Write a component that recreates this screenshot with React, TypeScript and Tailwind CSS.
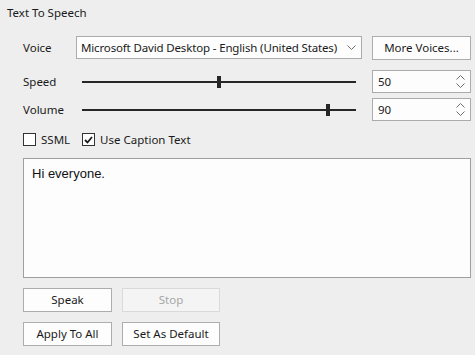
import React from 'react';

function Chevron({ dir = 'down' }: { dir?: 'up' | 'down' }) {
	return (
		<svg width="9" height="5" viewBox="0 0 9 5" className="block">
			{dir === 'down' ? (
				<path d="M0.5 0.5 L4.5 4.5 L8.5 0.5" fill="none" stroke="#6d6d6d" strokeWidth="1" />
			) : (
				<path d="M0.5 4.5 L4.5 0.5 L8.5 4.5" fill="none" stroke="#6d6d6d" strokeWidth="1" />
			)}
		</svg>
	);
}

function Slider({ pos }: { pos: number }) {
	return (
		<div className="relative w-[286px] h-[23px] flex items-center px-[6px]">
			<div className="relative w-full h-[2px] bg-[#262626]">
				<div className="absolute top-[-5px] w-[4px] h-[12px] bg-[#262626]" style={{ left: pos }} />
			</div>
		</div>
	);
}

function Spin({ value }: { value: string }) {
	return (
		<div className="ml-[10px] w-[99px] h-[23px] bg-[#fdfdfd] border border-[#ababab] flex items-center justify-between pl-[5px] pr-[5px]">
			<span>{value}</span>
			<div className="flex flex-col gap-[3px]">
				<Chevron dir="up" />
				<Chevron dir="down" />
			</div>
		</div>
	);
}

function Check({ checked, label }: { checked: boolean; label: string }) {
	return (
		<div className="flex items-center">
			<div className="w-[13px] h-[13px] bg-white border border-[#333333] flex items-center justify-center">
				{checked && (
					<svg width="9" height="8" viewBox="0 0 9 8">
						<path d="M1 4 L3.5 6.5 L8 1" fill="none" stroke="#1a1a1a" strokeWidth="1.8" />
					</svg>
				)}
			</div>
			<span className="ml-[5px]">{label}</span>
		</div>
	);
}

function Btn({ children, w, disabled }: { children: React.ReactNode; w: string; disabled?: boolean }) {
	return (
		<div
			className={
				'h-[24px] flex items-center justify-center border ' +
				w +
				(disabled ? ' bg-[#f4f4f4] border-[#dadada] text-[#a6a6a6]' : ' bg-[#fdfdfd] border-[#adadad] text-[#1a1a1a]')
			}
		>
			{children}
		</div>
	);
}

export default function App() {
	return (
		<div className="w-[475px] h-[355px] bg-[#eeeeee] text-[11.5px] text-[#1a1a1a] overflow-hidden whitespace-nowrap" style={{ fontFamily: '"Noto Sans", sans-serif' }}>
			<div className="pl-[7px] pt-[4px] leading-[17px]">Text To Speech</div>

			<div className="pl-[23px] pt-[15px]">
				{/* voice */}
				<div className="flex items-center h-[24px]">
					<div className="w-[53px]">Voice</div>
					<div className="w-[286px] h-[23px] self-start bg-[#fdfdfd] border border-[#ababab] flex items-center justify-between pl-[4px] pr-[5px]">
						<span className="tracking-[-0.15px]">Microsoft David Desktop - English (United States)</span>
						<Chevron />
					</div>
					<div className="ml-[10px] w-[99px] h-[24px] bg-[#fdfdfd] border border-[#adadad] flex items-center justify-center">
						More Voices...
					</div>
				</div>

				{/* speed */}
				<div className="flex items-center h-[23px] mt-[10px]">
					<div className="w-[53px]">Speed</div>
					<Slider pos={135} />
					<Spin value="50" />
				</div>

				{/* volume */}
				<div className="flex items-center h-[23px] mt-[5px]">
					<div className="w-[53px]">Volume</div>
					<Slider pos={244} />
					<Spin value="90" />
				</div>

				<div className="flex items-center gap-[12px] mt-[12px] h-[13px]">
					<Check checked={false} label="SSML" />
					<Check checked label="Use Caption Text" />
				</div>

				<div
					className="mt-[12px] w-[448px] h-[120px] bg-[#fdfdfd] border border-[#a0a0a0] px-[8px] pt-[5px] text-[13px] text-[#111111]"
					style={{ fontFamily: '"Liberation Sans", Arial, sans-serif' }}
				>
					Hi everyone.
				</div>

				<div className="flex gap-[10px] mt-[10px]">
					<Btn w="w-[89px]">Speak</Btn>
					<Btn w="w-[98px]" disabled>Stop</Btn>
				</div>
				<div className="flex gap-[10px] mt-[10px]">
					<Btn w="w-[89px]">Apply To All</Btn>
					<Btn w="w-[98px]">Set As Default</Btn>
				</div>
			</div>
		</div>
	);
}
